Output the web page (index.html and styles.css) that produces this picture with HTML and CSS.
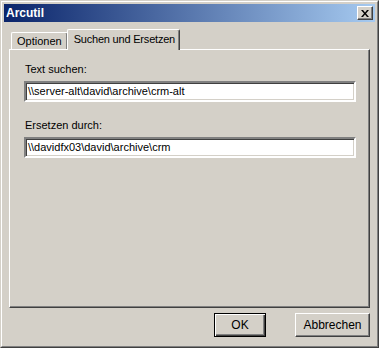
FILE: index.html
```html
<!DOCTYPE html>
<html lang="de">
<head>
    <meta charset="UTF-8">
    <title>Arcutil</title>
    <link rel="stylesheet" href="styles.css">
</head>
<body>
<div class="window">
  <div class="frame">
    <div class="title-bar">
      <span class="title">Arcutil</span>
      <span class="close-button">
        <svg width="8" height="7" viewBox="0 0 8 7">
          <path d="M0 0h2l2 2.5L6 0h2L5 3.5 8 7H6L4 4.5 2 7H0l3-3.5z" fill="#000"/>
        </svg>
      </span>
    </div>
    <div class="content">
      <div class="tab-strip">
        <div class="tab">Optionen</div>
        <div class="tab tab-active">Suchen und Ersetzen</div>
      </div>
      <div class="panel">
        <div class="field">
          <div class="label">Text suchen:</div>
          <div class="textbox">\\server-alt\david\archive\crm-alt</div>
        </div>
        <div class="field">
          <div class="label">Ersetzen durch:</div>
          <div class="textbox">\\davidfx03\david\archive\crm</div>
        </div>
      </div>
      <div class="button-row">
        <button class="button default-button">OK</button>
        <button class="button">Abbrechen</button>
      </div>
    </div>
  </div>
</div>
</body>
</html>
```

FILE: styles.css
```css
body {
    margin: 0;
    padding: 0;
    font-family: "Liberation Sans", Arial, sans-serif;
    font-size: 11px;
    color: #000;
    background: #d4d0c8;
}
.window {
    width: 379px;
    height: 348px;
    box-sizing: border-box;
    border: 1px solid;
    border-color: #d4d0c8 #404040 #404040 #d4d0c8;
    background: #d4d0c8;
    display: flex;
}
.frame {
    flex: 1;
    border: 1px solid;
    border-color: #fff #808080 #808080 #fff;
    padding: 2px;
    display: flex;
    flex-direction: column;
}
.title-bar {
    height: 18px;
    background: linear-gradient(to right, #0a246a, #a6caf0);
    display: flex;
    align-items: center;
    justify-content: space-between;
    padding: 0 2px 0 2px;
}
.title {
    color: #fff;
    font-weight: bold;
    font-size: 12px;
}
.close-button {
    width: 14px;
    height: 12px;
    background: #d4d0c8;
    border: 1px solid;
    border-color: #fff #404040 #404040 #fff;
    box-shadow: inset -1px -1px #808080;
    display: flex;
    align-items: center;
    justify-content: center;
}
.content {
    flex: 1;
    display: flex;
    flex-direction: column;
    padding: 7px 1px 0 5px;
}
.tab-strip {
    display: flex;
    align-items: flex-end;
    padding-left: 2px;
    height: 20px;
}
.tab {
    height: 16px;
    line-height: 17px;
    padding: 0 5px;
    border-top: 1px solid #fff;
    border-left: 1px solid #fff;
    border-right: 1px solid #404040;
    border-radius: 2px 2px 0 0;
    box-shadow: inset -1px 0 #808080;
    background: #d4d0c8;
}
.tab-active {
    height: 20px;
    line-height: 19px;
    padding: 0 4px 0 6px;
    letter-spacing: -0.2px;
    margin-left: -1px;
    margin-bottom: -1px;
    position: relative;
    z-index: 1;
}
.panel {
    width: 361px;
    height: 259px;
    box-sizing: border-box;
    border: 1px solid;
    border-color: #fff #404040 #404040 #fff;
    box-shadow: inset -1px -1px #808080;
    padding: 12px 13px 0 14px;
}
.field {
    display: flex;
    flex-direction: column;
    gap: 5px;
}
.field + .field {
    margin-top: 16px;
}
.label {
    line-height: 14px;
    padding-left: 1px;
}
.textbox {
    height: 17px;
    line-height: 17px;
    background: #fff;
    border: 2px solid;
    border-color: #808080 #fff #fff #808080;
    box-shadow: inset 1px 1px #404040, inset -1px -1px #d4d0c8;
    padding-left: 2px;
    white-space: nowrap;
}
.button-row {
    display: flex;
    justify-content: flex-end;
    gap: 29px;
    margin-top: 5px;
    width: 361px;
}
.button {
    height: 24px;
    width: 75px;
    font-family: "Liberation Sans", Arial, sans-serif;
    font-size: 12px;
    background: #d4d0c8;
    border: 1px solid;
    border-color: #fff #404040 #404040 #fff;
    box-shadow: inset -1px -1px #808080;
    padding: 0;
}
.default-button {
    width: 52px;
    border-color: #000;
    box-shadow: inset 1px 1px #fff, inset -1px -1px #404040, inset -2px -2px #808080;
}
```
